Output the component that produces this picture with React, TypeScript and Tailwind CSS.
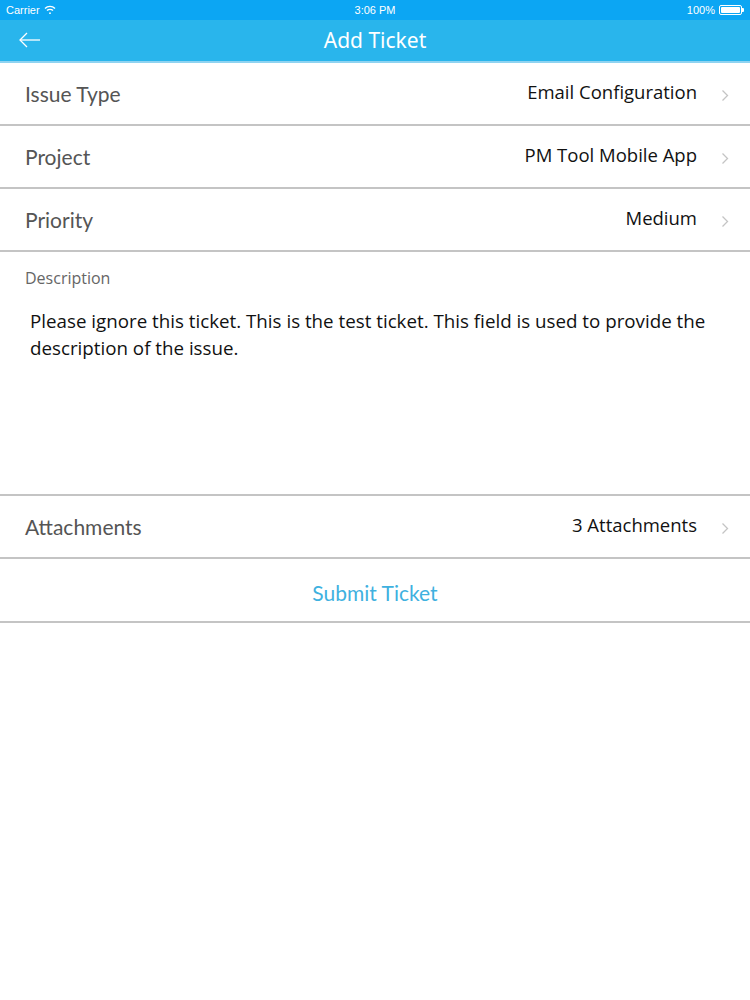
const ROWS = [
  { label: "Issue Type", value: "Email Configuration" },
  { label: "Project", value: "PM Tool Mobile App" },
  { label: "Priority", value: "Medium" },
];

const labelFont = "[font-family:'Lato','Noto_Sans',sans-serif]";

const Chevron = () => (
  <svg className="ml-[24px] mt-[4px]" width="8" height="13" viewBox="0 0 8 13" fill="none" stroke="#c4c4c4" strokeWidth="1.3">
    <path d="M1.5 1.5 L6.5 6.5 L1.5 11.5" />
  </svg>
);

const Row = ({ label, value }: { label: string; value: string }) => (
  <div className="flex items-center h-[63px] border-b-2 border-[#c4c4c4] pl-[25px] pr-[21px]">
    <span className={`${labelFont} text-[21px] text-[#555555] mt-[1px]`}>{label}</span>
    <span className="ml-auto [font-family:'Open_Sans',sans-serif] text-[18.5px] text-[#111111] -mt-[4px]">
      {value}
    </span>
    <Chevron />
  </div>
);

export default function App() {
  return (
    <div className="w-[750px] h-[1000px] bg-white [font-family:'Liberation_Sans',sans-serif]">
      {/* Status bar */}
      <div className="relative flex items-center h-[20px] bg-[#0ca6f3] text-white text-[11px] px-[6px]">
        <span className="flex items-center gap-[4px]">
          Carrier
          <svg width="12" height="10" viewBox="0 0 12 10" fill="none" stroke="white" strokeWidth="1.4">
            <path d="M1 3.5 A7 7 0 0 1 11 3.5" />
            <path d="M3 5.6 A4.3 4.3 0 0 1 9 5.6" />
            <circle cx="6" cy="8.2" r="0.9" fill="white" stroke="none" />
          </svg>
        </span>
        <span className="absolute left-1/2 -translate-x-1/2">3:06 PM</span>
        <span className="ml-auto flex items-center gap-[4px]">
          100%
          <span className="flex items-center">
            <span className="w-[23px] h-[10px] border border-white rounded-[2px] p-[1px]">
              <span className="block w-full h-full bg-white rounded-[1px]" />
            </span>
            <span className="w-[2px] h-[4px] bg-white rounded-r-[1px]" />
          </span>
        </span>
      </div>

      {/* Nav bar */}
      <div className="relative flex items-center justify-center h-[43px] bg-[#29b5ec] border-b-2 border-[#8fd3f1]">
        <svg className="absolute left-[18px] top-[12px]" width="24" height="16" viewBox="0 0 24 16" fill="none" stroke="white" strokeWidth="1.3">
          <path d="M22 8 H2" />
          <path d="M9 1 L2 8 L9 15" />
        </svg>
        <span className="[font-family:'Noto_Sans',sans-serif] text-[21px] text-white">Add Ticket</span>
      </div>

      {ROWS.map((r) => (
        <Row key={r.label} {...r} />
      ))}

      {/* Description */}
      <div className="h-[244px] border-b-2 border-[#c4c4c4] pl-[25px] pr-[20px] pt-[14px]">
        <div className="[font-family:'Open_Sans',sans-serif] text-[16px] text-[#666666]">Description</div>
        <p className="mt-[17px] pl-[5px] [font-family:'Open_Sans',sans-serif] text-[18.75px] leading-[27px] text-[#111111]">
          Please ignore this ticket. This is the test ticket. This field is used to provide the description of the issue.
        </p>
      </div>

      <Row label="Attachments" value="3 Attachments" />

      {/* Submit */}
      <div className="flex items-center justify-center h-[64px] border-b-2 border-[#c4c4c4]">
        <span className={`${labelFont} text-[21px] text-[#3fb1df] mt-[6px]`}>Submit Ticket</span>
      </div>
    </div>
  );
}
